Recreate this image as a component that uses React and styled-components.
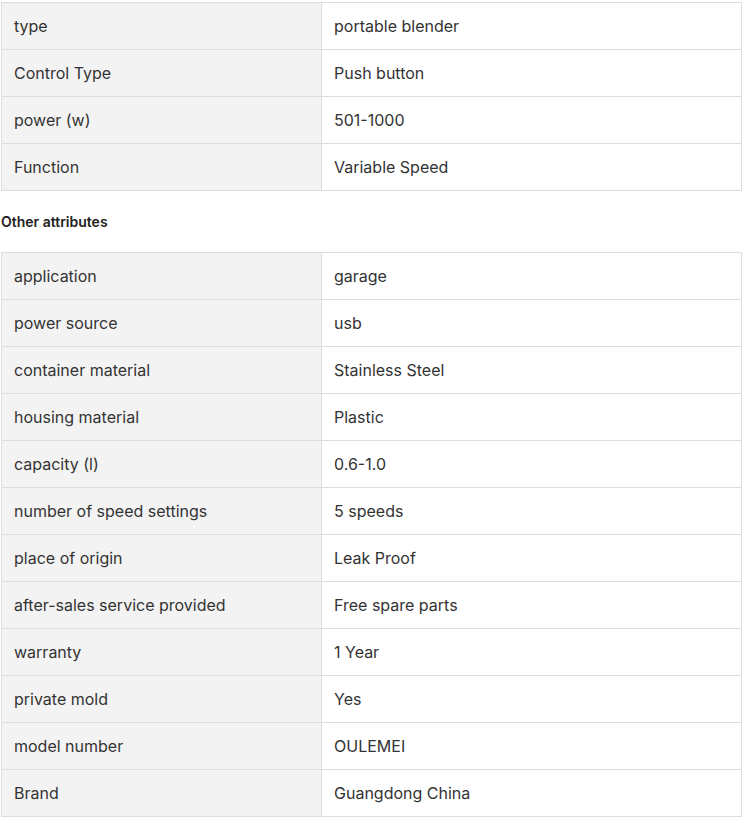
import React from "react";
import styled, { createGlobalStyle } from "styled-components";

const mainAttrs = [
  ["type", "portable blender"],
  ["Control Type", "Push button"],
  ["power (w)", "501-1000"],
  ["Function", "Variable Speed"],
];

const otherAttrs = [
  ["application", "garage"],
  ["power source", "usb"],
  ["container material", "Stainless Steel"],
  ["housing material", "Plastic"],
  ["capacity (l)", "0.6-1.0"],
  ["number of speed settings", "5 speeds"],
  ["place of origin", "Leak Proof"],
  ["after-sales service provided", "Free spare parts"],
  ["warranty", "1 Year"],
  ["private mold", "Yes"],
  ["model number", "OULEMEI"],
  ["Brand", "Guangdong China"],
];

const AttrTable = ({ rows }) => (
  <Table>
    <tbody>
      {rows.map(([k, v]) => (
        <tr key={k}>
          <Cell label>{k}</Cell>
          <Cell>{v}</Cell>
        </tr>
      ))}
    </tbody>
  </Table>
);

const App = () => {
  return (
    <React.Fragment>
      <GlobalStyle />
      <Page>
        <AttrTable rows={mainAttrs} />
        <Heading>Other attributes</Heading>
        <AttrTable rows={otherAttrs} />
      </Page>
    </React.Fragment>
  );
};

const GlobalStyle = createGlobalStyle`
  body {
    margin: 0;
    background: #ffffff;
    font-family: Inter, "Liberation Sans", sans-serif;
  }
`;

const Page = styled.div`
  padding: 2px 0 0 1px;
  width: 741px;
`;

const Table = styled.table`
  width: 741px;
  border-collapse: collapse;
  table-layout: fixed;
`;

const Cell = styled.td`
  width: ${(p) => (p.label ? "295px" : "auto")};
  padding: 14px 12px;
  line-height: 18px;
  font-size: 16px;
  color: #333333;
  background: ${(p) => (p.label ? "#f3f3f3" : "#ffffff")};
  border: 1px solid #dddddd;
  white-space: nowrap;
`;

const Heading = styled.div`
  padding: 22px 0;
  line-height: 17px;
  font-size: 14px;
  font-weight: 600;
  color: #222222;
`;

export default App;
